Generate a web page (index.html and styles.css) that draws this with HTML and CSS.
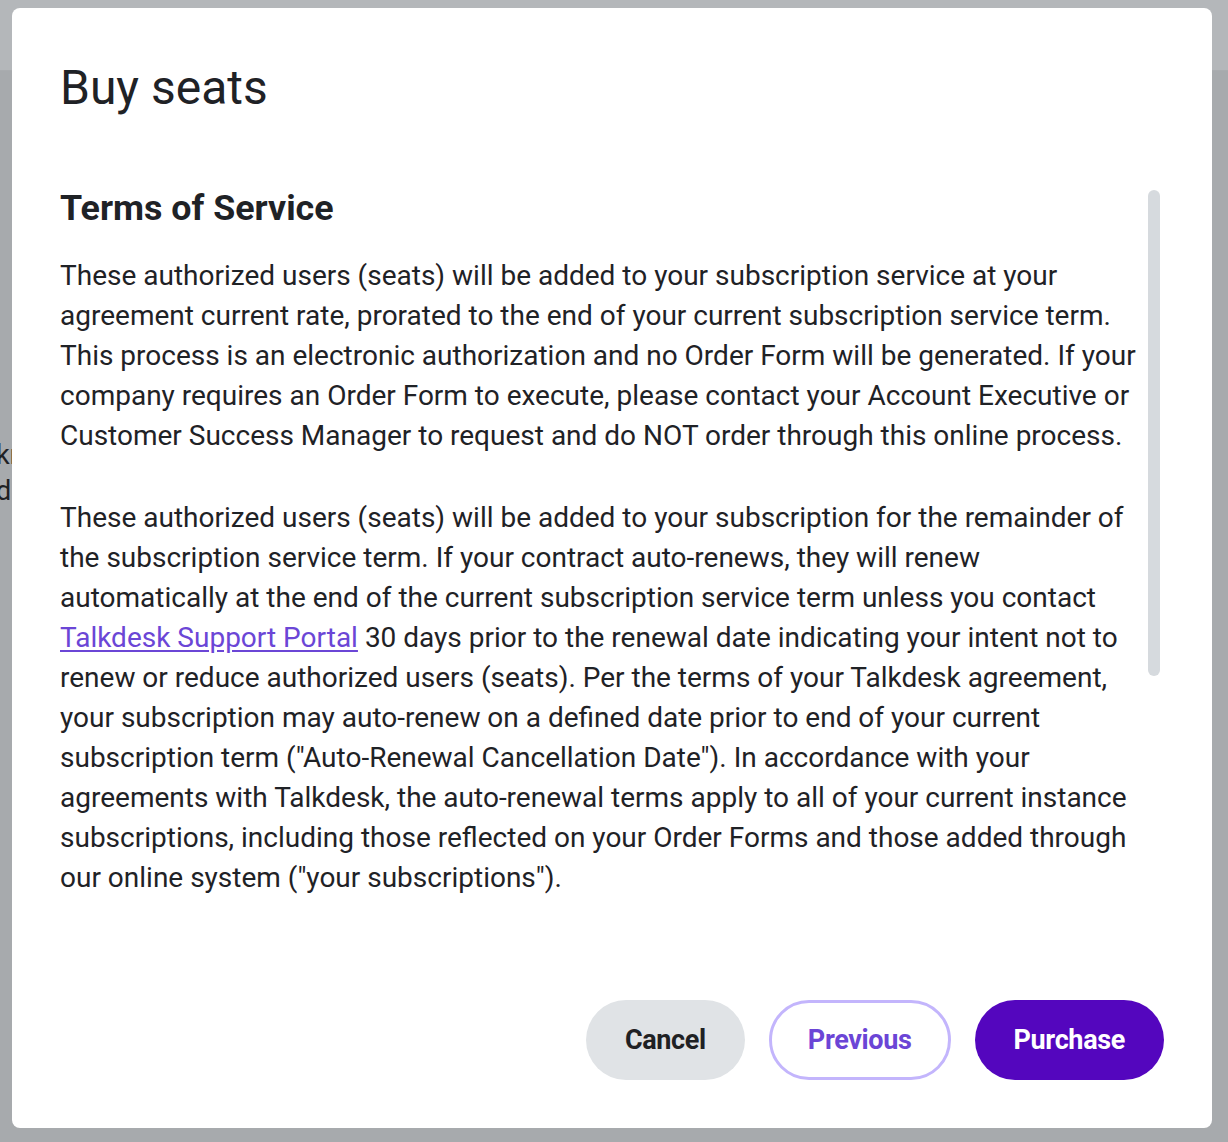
FILE: index.html
```html
<!DOCTYPE html>
<html lang="en">
<head>
<meta charset="utf-8">
<title>Buy seats</title>
<link rel="stylesheet" href="styles.css">
</head>
<body>
<div class="app">
  <div class="app-header"></div>
  <div class="app-main">
    <div class="app-frag">kr</div>
    <div class="app-frag">d</div>
  </div>
</div>
<div class="modal" role="dialog" aria-labelledby="dlg-title">
  <h1 class="modal-title" id="dlg-title">Buy seats</h1>
  <div class="modal-body">
    <div class="terms">
      <h2 class="terms-title">Terms of Service</h2>
      <p class="terms-text">These authorized users (seats) will be added to your subscription service at your agreement current rate, prorated to the end of your current subscription service term. This process is an electronic authorization and no Order Form will be generated. If your company requires an Order Form to execute, please contact your Account Executive or Customer Success Manager to request and do NOT order through this online process.</p>
      <p class="terms-text">These authorized users (seats) will be added to your subscription for the remainder of the subscription service term. If your contract auto-renews, they will renew automatically at the end of the current subscription service term unless you contact <a class="link" href="#">Talkdesk Support Portal</a> 30 days prior to the renewal date indicating your intent not to renew or reduce authorized users (seats). Per the terms of your Talkdesk agreement, your subscription may auto-renew on a defined date prior to end of your current subscription term ("Auto-Renewal Cancellation Date"). In accordance with your agreements with Talkdesk, the auto-renewal terms apply to all of your current instance subscriptions, including those reflected on your Order Forms and those added through our online system ("your subscriptions").</p>
    </div>
    <div class="scroll-track"><div class="scroll-thumb"></div></div>
  </div>
  <div class="modal-footer">
    <button class="btn btn-secondary" type="button">Cancel</button>
    <button class="btn btn-outline" type="button">Previous</button>
    <button class="btn btn-primary" type="button">Purchase</button>
  </div>
</div>
</body>
</html>
```
FILE: styles.css
```css
* { box-sizing: border-box; }
html, body { margin: 0; padding: 0; }
body {
  font-family: Roboto, "Liberation Sans", Arial, sans-serif;
  background: #a6a9ac;
  width: 1228px;
  height: 1142px;
  overflow: hidden;
}
.app { height: 1142px; display: flex; flex-direction: column; }
.app-header { height: 71px; background: #b4b7ba; border-bottom: 1px solid #a9acaf; }
.app-main { flex: 1; background: #a7aaad; padding-top: 366px; }
.app-frag {
  font-size: 27px;
  line-height: 36px;
  color: #1f2124;
  margin-left: -4px;
}
.modal {
  position: fixed;
  left: 12px;
  top: 8px;
  width: 1200px;
  height: 1120px;
  background: #fff;
  border-radius: 8px;
  padding: 0 48px 48px 49px;
  display: flex;
  flex-direction: column;
  color: #1f2226;
}
.modal-title {
  margin: 0;
  padding-top: 50px;
  font-size: 48px;
  font-weight: 400;
  line-height: 60px;
  margin-left: -1px;
}
.modal-body {
  display: flex;
  margin-top: 68px;
  flex: 1;
}
.terms { flex: 1; padding-right: 7px; margin-left: -1px; }
.terms-title {
  margin: 0 0 26px;
  font-size: 35.8px;
  font-weight: 700;
  line-height: 44px;
}
.terms-text {
  margin: 0 0 42px;
  font-size: 28px;
  line-height: 40px;
}
.link { color: #6b46d6; text-decoration: underline; text-underline-offset: 3px; }
.scroll-track { width: 16px; padding: 4px 4px 0 0; }
.scroll-thumb { width: 12px; height: 486px; border-radius: 6px; background: #d6dade; }
.modal-footer {
  display: flex;
  justify-content: flex-end;
  gap: 24px;
}
.btn {
  height: 80px;
  border-radius: 40px;
  font-family: Roboto, "Liberation Sans", Arial, sans-serif;
  font-size: 27px;
  font-weight: 700;
  letter-spacing: -0.35px;
  padding: 0 36px;
  border: 3px solid transparent;
  cursor: pointer;
}
.btn-secondary { background: #e0e3e6; color: #1f2124; }
.btn-outline { background: #fff; border-color: #c3b5fc; color: #6b45d6; }
.btn-primary { background: #5406be; color: #fff; }
```
